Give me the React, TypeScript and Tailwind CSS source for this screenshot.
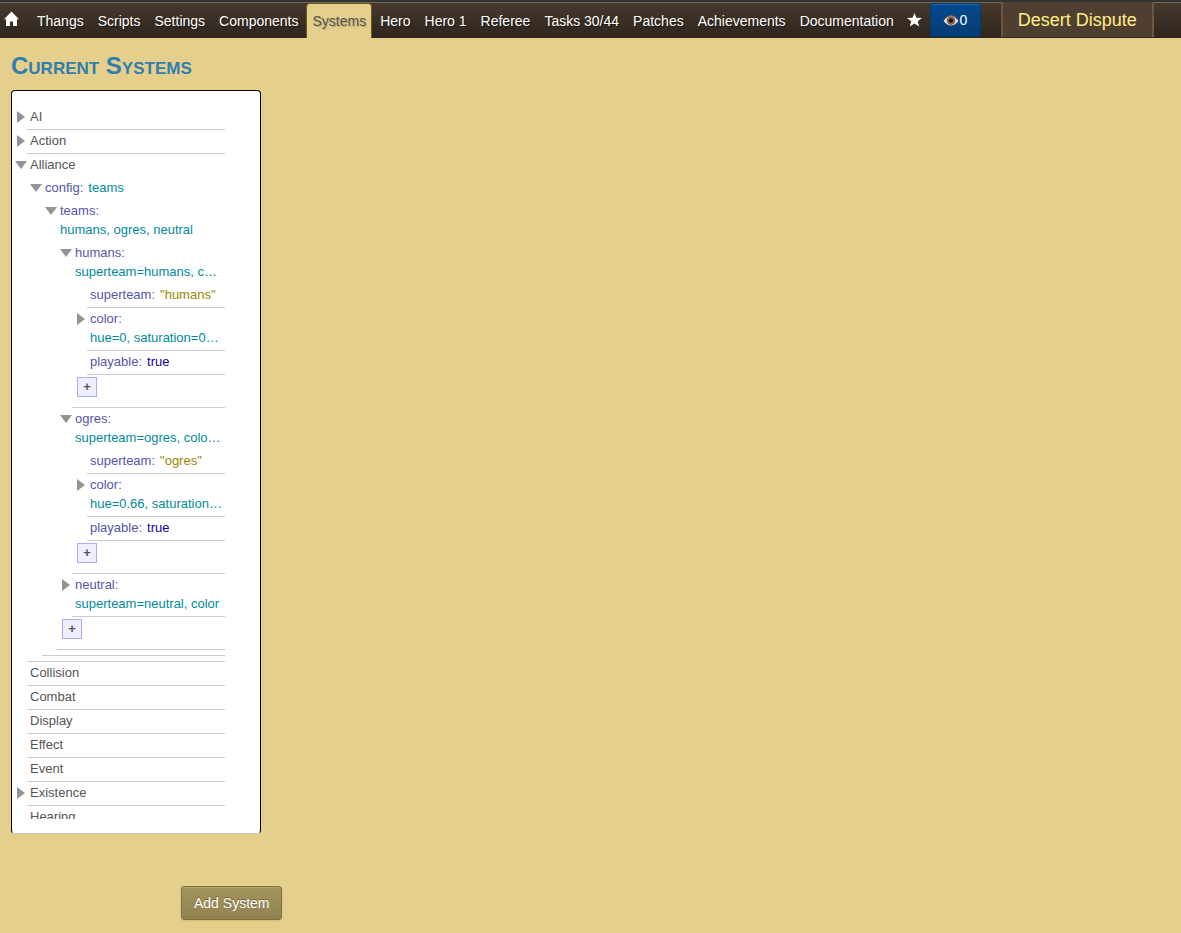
import React from "react";

type Tone = "object" | "string" | "boolean";

interface TreeNode {
  name: string;
  value?: string;
  tone?: Tone;
  stacked?: boolean;
  state?: "open" | "closed";
  children?: TreeNode[];
  addable?: boolean;
}

const team = (name: string, summary: string, color: string): TreeNode => ({
  name: `${name}:`,
  value: summary,
  stacked: true,
  state: "open",
  addable: true,
  children: [
    { name: "superteam:", value: `"${name}"`, tone: "string" },
    { name: "color:", value: color, stacked: true, state: "closed" },
    { name: "playable:", value: "true", tone: "boolean" },
  ],
});

const systems: TreeNode[] = [
  { name: "AI", state: "closed" },
  { name: "Action", state: "closed" },
  {
    name: "Alliance",
    state: "open",
    children: [
      {
        name: "config:",
        value: "teams",
        state: "open",
        children: [
          {
            name: "teams:",
            value: "humans, ogres, neutral",
            stacked: true,
            state: "open",
            addable: true,
            children: [
              team("humans", "superteam=humans, c…", "hue=0, saturation=0…"),
              team("ogres", "superteam=ogres, colo…", "hue=0.66, saturation…"),
              { name: "neutral:", value: "superteam=neutral, color", stacked: true, state: "closed" },
            ],
          },
        ],
      },
    ],
  },
  { name: "Collision" },
  { name: "Combat" },
  { name: "Display" },
  { name: "Effect" },
  { name: "Event" },
  { name: "Existence", state: "closed" },
  { name: "Hearing" },
];

const toneClass: Record<Tone, string> = {
  object: "text-[#008b99]",
  string: "text-[#998800]",
  boolean: "text-[#1a0099]",
};

function Toggle({ open, label }: { open: boolean; label: string }) {
  return (
    <button
      type="button"
      aria-expanded={open}
      aria-label={label}
      className="flex h-[19px] w-3 shrink-0 items-center justify-center"
    >
      <svg width="12" height="12" viewBox="0 0 12 12" fill="#949494" aria-hidden="true">
        {open ? <path d="M0 2H12L6 10Z" /> : <path d="M2 0L10 6L2 12Z" />}
      </svg>
    </button>
  );
}

function Node({ node, depth }: { node: TreeNode; depth: number }) {
  const { name, value, tone = "object", stacked, state, children, addable } = node;
  return (
    <li className={depth === 0 ? "" : "pl-[15px]"}>
      <div className="flex pt-px">
        {state ? <Toggle open={state === "open"} label={name} /> : <span className="w-3 shrink-0" />}
        <div className={stacked ? "min-w-0 flex-1 pb-[3px] pl-[3px]" : "flex min-w-0 flex-1 gap-[5px] pb-[3px] pl-[3px]"}>
          <div className={depth === 0 ? "text-[#555555]" : "text-[#5555aa]"}>{name}</div>
          {value && <div className={`truncate ${toneClass[tone]}`}>{value}</div>}
        </div>
      </div>
      {children && (
        <ul className="pb-[5px]">
          {children.map((c) => (
            <Node key={c.name} node={c} depth={depth + 1} />
          ))}
          {addable && (
            <li className="pt-[2px] pb-[5px] pl-[17px]">
              <button
                type="button"
                aria-label="Add property"
                className="block size-5 border border-[#aaaaff] bg-[#eeeeff] text-center leading-[18px] font-bold text-[#555555]"
              >
                +
              </button>
            </li>
          )}
        </ul>
      )}
      <div className="ml-3 h-px bg-[#cccccc]" />
    </li>
  );
}

const tabs = [
  "Thangs",
  "Scripts",
  "Settings",
  "Components",
  "Systems",
  "Hero",
  "Hero 1",
  "Referee",
  "Tasks 30/44",
  "Patches",
  "Achievements",
  "Documentation",
];

function NavBar() {
  return (
    <nav className="flex h-[38px] shrink-0 border-t-2 border-[#333333] bg-linear-to-b from-[#483a2d] to-[#2f251e] text-sm leading-5 whitespace-nowrap text-white shadow-[inset_0_1px_0_#68655f]">
      <a href="#home" aria-label="Home" className="mr-[11px] flex items-center pb-[2px] pl-1">
        <svg width="15" height="16" viewBox="0 0 15 16" fill="currentColor" aria-hidden="true">
          <path d="M7.5 0.5L15 8.2H13V15H9V10.5H6V15H2V8.2H0Z" />
        </svg>
      </a>
      {tabs.map((t) =>
        t === "Systems" ? (
          <a
            key={t}
            href="#systems"
            aria-current="page"
            className="mx-px mt-px rounded-t border border-b-0 border-[#6d5a1c] bg-[#e4cf8c] px-[5px] pt-[7px] text-[#555555] [text-shadow:1px_1px_1px_#b3a56f]"
          >
            {t}
          </a>
        ) : (
          <a key={t} href={`#${t.toLowerCase()}`} className="px-[7px] pt-[9px] [text-shadow:1px_1px_1px_#1d1712]">
            {t}
          </a>
        ),
      )}
      <a href="#favorite" aria-label="Favorite" className="flex items-center px-[6px]">
        <svg width="15" height="14" viewBox="0 0 15 14" fill="currentColor" aria-hidden="true">
          <path d="M7.5 0L9.4 4.8L15 5L10.7 8.2L12.2 13.4L7.5 10.4L2.8 13.4L4.3 8.2L0 5L5.6 4.8Z" />
        </svg>
      </a>
      <button
        type="button"
        className="my-px ml-[2px] flex w-[51px] items-center justify-center rounded-[3px] border border-[#023a70] bg-linear-to-b from-[#044a90] to-[#043c75] shadow-[inset_0_1px_0_#2563a0]"
      >
        <svg width="16" height="13" viewBox="0 0 16 13" aria-hidden="true">
          <path d="M0.5 7Q8 -3 15.5 7Q8 16 0.5 7Z" fill="#e6e0dc" />
          <path d="M1 5.5Q8 -2.5 15 5.5" fill="none" stroke="#8a6450" strokeWidth="1" />
          <circle cx="8" cy="6.6" r="4.3" fill="#8a6450" />
          <circle cx="8" cy="6.6" r="2.2" fill="#1c1614" />
        </svg>
        0
      </button>
      <a
        href="#level"
        className="mb-px ml-5 border-x-2 border-[#6d553f] bg-[#4f3f30] px-[15px] pt-[5px] text-lg leading-[26px] text-[#ffee88]"
      >
        Desert Dispute
      </a>
    </nav>
  );
}

export default function App() {
  return (
    <div className="flex h-screen flex-col bg-[#e4cf8c] font-['Liberation_Sans',Arial,sans-serif]">
      <NavBar />
      <main className="flex min-h-0 flex-1 flex-col items-start px-[11px] pb-[13px]">
        <h1 className="mt-[13px] mb-[9px] text-2xl leading-[30px] font-bold text-[#317eac] [font-variant:small-caps]">
          Current Systems
        </h1>
        <section className="flex min-h-0 w-[250px] flex-1 flex-col rounded-[4px] border border-black border-b-[#cccccc] bg-white pt-[15px] pr-[35px] pb-[14px] pl-[3px]">
          <ul className="min-h-0 flex-1 overflow-hidden text-[13px] leading-[19px]">
            {systems.map((s) => (
              <Node key={s.name} node={s} depth={0} />
            ))}
          </ul>
        </section>
        <button
          type="button"
          className="mt-[52px] ml-[170px] rounded-[3px] border border-[#7d713f] bg-linear-to-b from-[#a4955e] to-[#918350] px-3 py-[6px] text-sm leading-5 text-white shadow-[inset_0_1px_0_#b0a36e,0_1px_2px_#cdb978] [text-shadow:0_-1px_0_#6d6238]"
        >
          Add System
        </button>
      </main>
    </div>
  );
}
